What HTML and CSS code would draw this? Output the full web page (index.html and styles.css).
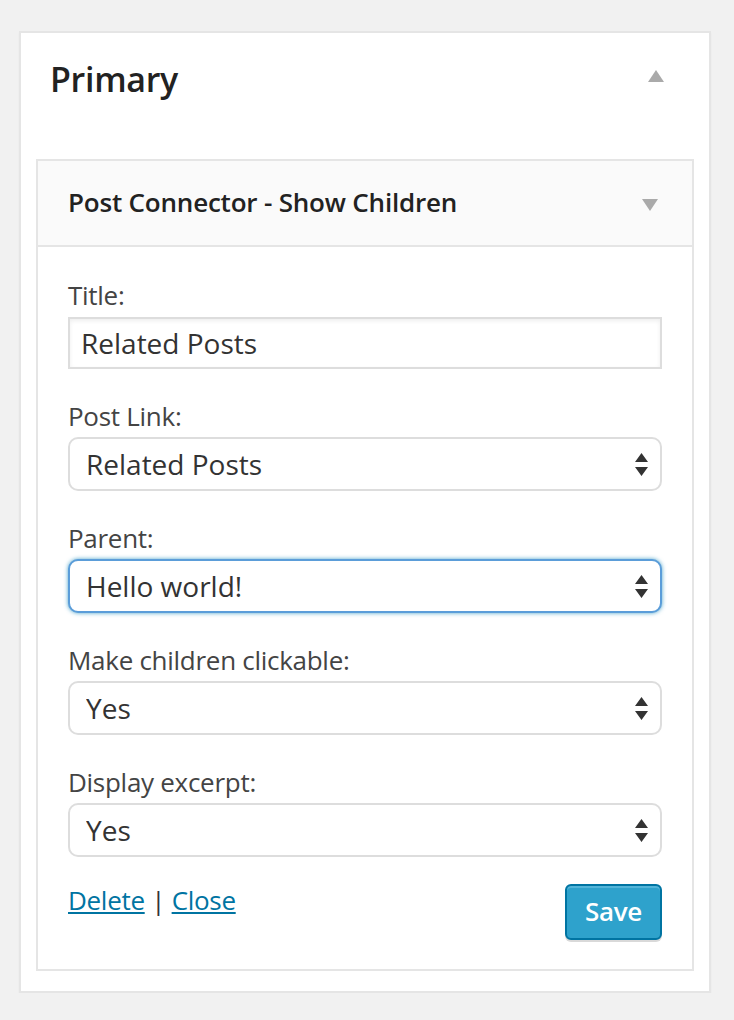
FILE: index.html
```html
<!DOCTYPE html>
<html lang="en">
<head>
<meta charset="utf-8">
<title>Primary – Widgets</title>
<link rel="stylesheet" href="styles.css">
</head>
<body>
<div class="sidebar">
  <div class="sidebar-head">
    <h2 class="sidebar-title">Primary</h2>
    <svg class="tri tri-up" width="16" height="12" viewBox="0 0 16 12"><path d="M8 0 L16 12 L0 12 Z"/></svg>
  </div>
  <div class="widget">
    <div class="widget-head">
      <h3 class="widget-title">Post Connector - Show Children</h3>
      <svg class="tri" width="16" height="12" viewBox="0 0 16 12"><path d="M0 0 L16 0 L8 12 Z"/></svg>
    </div>
    <form class="widget-body">
      <div class="field">
        <label class="label" for="f-title">Title:</label>
        <input class="input" id="f-title" type="text" value="Related Posts">
      </div>
      <div class="field">
        <label class="label" for="f-link">Post Link:</label>
        <div class="select-wrap">
          <select class="select" id="f-link"><option>Related Posts</option></select>
          <svg class="updown" width="13" height="23" viewBox="0 0 13 23"><path d="M6.5 0 L13 9 L0 9 Z M0 14 L13 14 L6.5 23 Z"/></svg>
        </div>
      </div>
      <div class="field">
        <label class="label" for="f-parent">Parent:</label>
        <div class="select-wrap">
          <select class="select is-focus" id="f-parent"><option>Hello world!</option></select>
          <svg class="updown" width="13" height="23" viewBox="0 0 13 23"><path d="M6.5 0 L13 9 L0 9 Z M0 14 L13 14 L6.5 23 Z"/></svg>
        </div>
      </div>
      <div class="field">
        <label class="label" for="f-click">Make children clickable:</label>
        <div class="select-wrap">
          <select class="select" id="f-click"><option>Yes</option></select>
          <svg class="updown" width="13" height="23" viewBox="0 0 13 23"><path d="M6.5 0 L13 9 L0 9 Z M0 14 L13 14 L6.5 23 Z"/></svg>
        </div>
      </div>
      <div class="field">
        <label class="label" for="f-excerpt">Display excerpt:</label>
        <div class="select-wrap">
          <select class="select" id="f-excerpt"><option>Yes</option></select>
          <svg class="updown" width="13" height="23" viewBox="0 0 13 23"><path d="M6.5 0 L13 9 L0 9 Z M0 14 L13 14 L6.5 23 Z"/></svg>
        </div>
      </div>
      <div class="actions">
        <div class="links"><a href="#">Delete</a> <span class="sep">|</span> <a href="#">Close</a></div>
        <button type="button" class="button-primary">Save</button>
      </div>
    </form>
  </div>
</div>
</body>
</html>
```
FILE: styles.css
```css
* { box-sizing: border-box; }
html, body {
  margin: 0;
  padding: 0;
  background: #f1f1f1;
  font-family: "Open Sans", "Noto Sans", sans-serif;
  color: #444;
}
.sidebar {
  width: 692px;
  margin: 31px 0 0 19px;
  background: #fff;
  border: 2px solid #e5e5e5;
  box-shadow: 0 2px 2px rgba(0,0,0,.04);
  padding: 0 15px 20px;
}
.sidebar-head {
  display: flex;
  justify-content: space-between;
  align-items: flex-start;
  padding: 22px 30px 0 14px;
  height: 126px;
}
.sidebar-title {
  margin: 0;
  font-size: 34px;
  line-height: 48px;
  font-weight: 600;
  letter-spacing: -0.3px;
  color: #222;
}
.tri { fill: #aaa; display: block; }
.tri-up { margin-top: 15px; }
.widget {
  border: 2px solid #e5e5e5;
  background: #fff;
}
.widget-head {
  display: flex;
  justify-content: space-between;
  align-items: center;
  height: 86px;
  padding: 0 34px 2px 30px;
  background: #fafafa;
  border-bottom: 2px solid #e5e5e5;
}
.widget-head .tri { margin-top: 6px; }
.widget-title {
  margin: 0;
  font-size: 26px;
  line-height: 36px;
  font-weight: 600;
  letter-spacing: -0.2px;
  color: #222;
}
.widget-body {
  display: flex;
  flex-direction: column;
  gap: 29px;
  padding: 30px 30px 29px;
}
.field {
  display: flex;
  flex-direction: column;
  gap: 3px;
}
.label {
  font-size: 26px;
  line-height: 36px;
  letter-spacing: -0.28px;
  color: #444;
}
.input {
  margin-top: 1px;
  height: 52px;
  width: 100%;
  border: 2px solid #ddd;
  box-shadow: inset 0 2px 4px rgba(0,0,0,.07);
  padding: 0 11px;
  font-family: inherit;
  font-size: 28px;
  color: #333;
  background: #fff;
  outline: none;
  border-radius: 0;
}
.select-wrap {
  display: grid;
}
.select {
  grid-area: 1 / 1;
  -webkit-appearance: none;
  appearance: none;
  height: 54px;
  width: 100%;
  border: 2px solid #ddd;
  border-radius: 10px;
  background: #fff;
  padding: 0 40px 0 16px;
  font-family: inherit;
  font-size: 28px;
  color: #333;
  outline: none;
}
.select.is-focus {
  border-color: #5b9dd9;
  box-shadow: 0 0 4px rgba(30,140,190,.8);
}
.updown {
  grid-area: 1 / 1;
  justify-self: end;
  align-self: center;
  margin-right: 14px;
  fill: #333;
  pointer-events: none;
}
.actions {
  display: flex;
  justify-content: space-between;
  align-items: flex-start;
  margin-top: -2px;
}
.links {
  font-size: 26px;
  line-height: 32px;
  letter-spacing: -0.3px;
  color: #444;
}
.links a {
  color: #0074a2;
  text-decoration: underline;
}
.sep { color: #333; }
.button-primary {
  height: 56px;
  padding: 0 18px 2px;
  border: 2px solid #0074a2;
  border-radius: 6px;
  background: #2ea2cc;
  color: #fff;
  font-family: inherit;
  font-size: 26px;
  font-weight: 600;
  letter-spacing: -0.3px;
  line-height: 50px;
  box-shadow: inset 0 2px 0 rgba(120,200,230,.5), 0 2px 0 rgba(0,0,0,.15);
  cursor: pointer;
}
```
